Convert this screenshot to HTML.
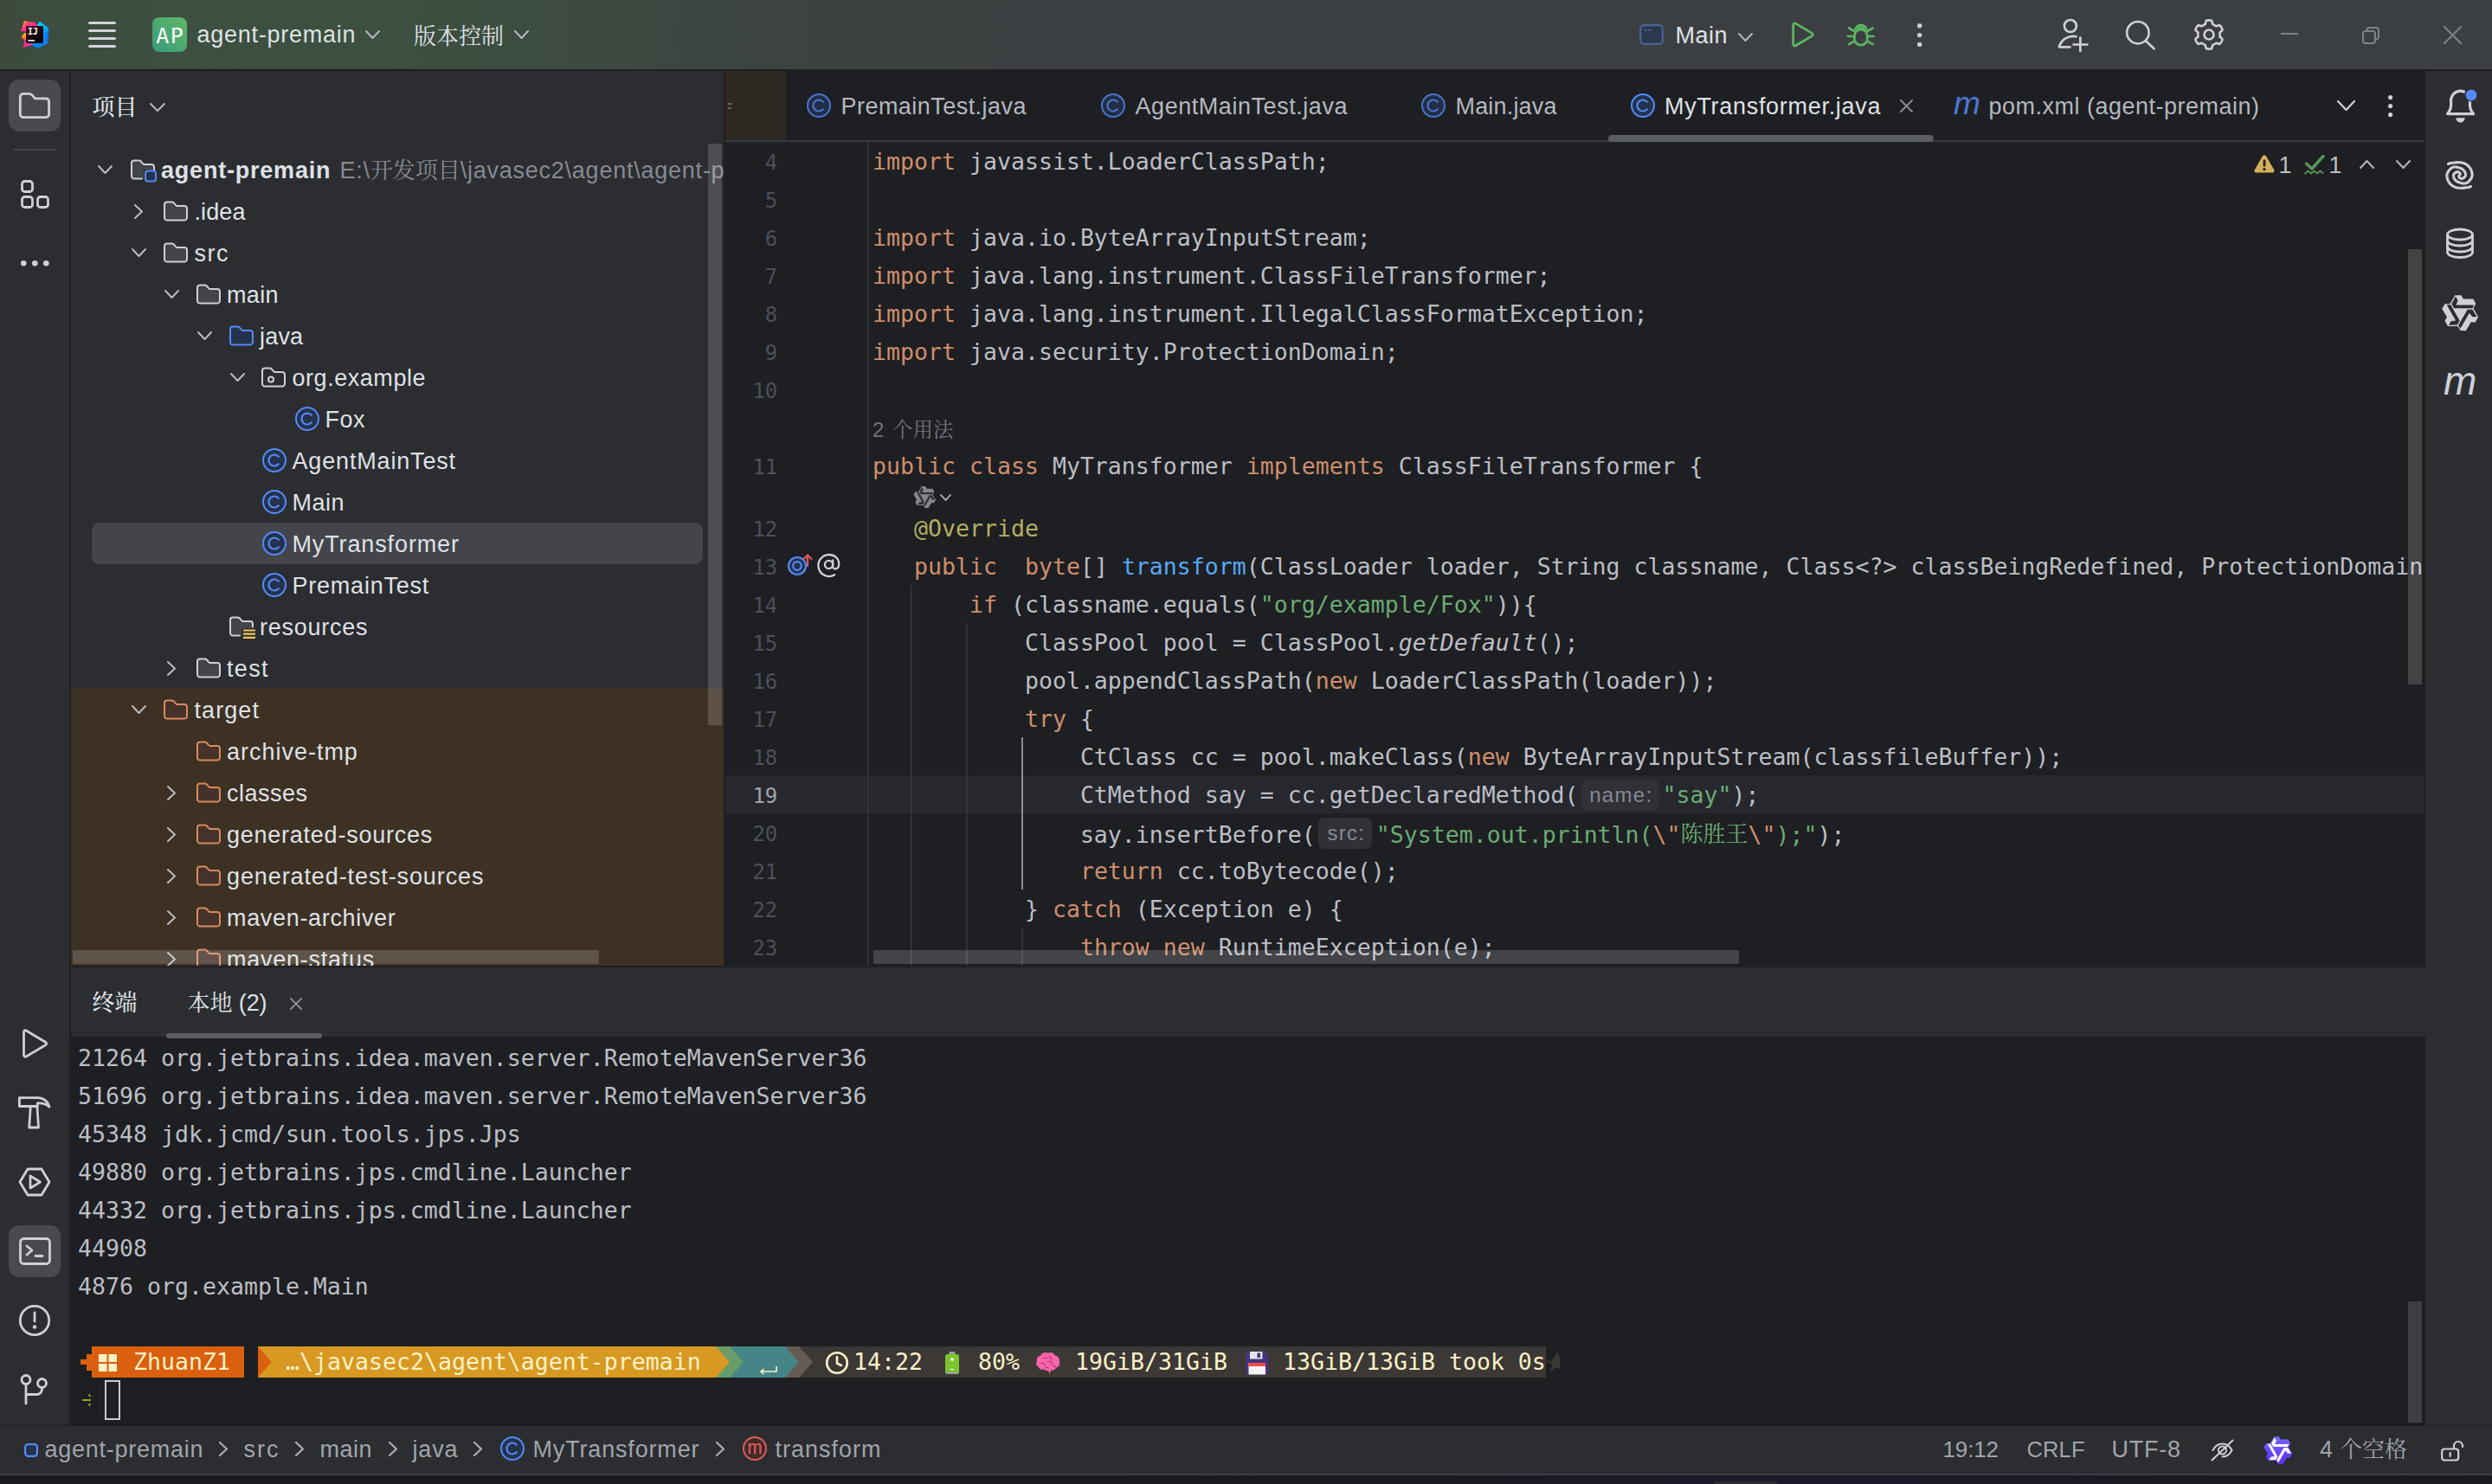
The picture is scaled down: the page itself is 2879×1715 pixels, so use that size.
<!DOCTYPE html>
<html lang="zh-CN"><head><meta charset="utf-8"><title>agent-premain – MyTransformer.java</title>
<style>
*{box-sizing:border-box;margin:0;padding:0}
html,body{width:2879px;height:1715px;overflow:hidden;background:#1e1f22}
body{font-family:'Liberation Sans','Noto Serif CJK SC',sans-serif;font-size:27px;color:#dfe1e5;position:relative}
#app{position:absolute;left:0;top:0;width:2879px;height:1715px;overflow:hidden}
.ic{position:absolute;overflow:visible;display:block}
.t{position:absolute;white-space:pre;line-height:1;font-family:'Liberation Sans','Noto Serif CJK SC',sans-serif}
.p{display:inline-block;width:0;height:0}
.cj{letter-spacing:0}
.clip{position:absolute;overflow:hidden}
.clipin{position:absolute;width:2879px;height:1715px}
.tb-bg{position:absolute;left:0;top:0;width:2879px;height:80px;background:linear-gradient(90deg,#3c4b3e 0,#3d4f40 200px,#3d5040 420px,#3d4b40 640px,#3c4441 860px,#3c4041 1050px,#3c3f41 1200px,#3c3f41 100%)}
.ap-badge{position:absolute;left:176px;top:20px;width:40px;height:40px;border-radius:8px;background:linear-gradient(45deg,#3a9a7c 0,#4aa872 45%,#62b866 100%)}
.ln,.cl,.tl,.pl,.pt{position:absolute;white-space:pre;font-family:'DejaVu Sans Mono','Liberation Mono','Noto Serif CJK SC',monospace;font-size:26.576px;height:44px;line-height:44px}
.ln{color:#4b5059;font-size:24px;margin-top:1px}
.ln.cur{color:#a1a3ab}
.cl{left:1008px;color:#bcbec4}
.tl{left:90px;color:#bcbec4}
.pl{left:0;width:0}
.pt{top:0;color:#fbf1c7}
.k{color:#cf8e6d}.s{color:#6aab73}.f{color:#56a8f5}.a{color:#b3ae60}.i{font-style:italic}.e{color:#cf8e6d}
.cjk{font-family:'Noto Serif CJK SC',serif;font-size:26px;position:relative;top:-1px}
.hint{display:inline-block;position:relative;height:44px;vertical-align:top;text-align:center}
.hb{position:absolute;top:4px;height:36px;border-radius:7px;background:#2f3136}
.ht{position:relative;top:-1.5px;font-family:'Liberation Sans','Noto Serif CJK SC',sans-serif;font-size:24px;letter-spacing:1.3px;margin-right:-1.3px;color:#868a91}
.cursor{position:absolute;border:2px solid #c9cbd0}
</style></head>
<body>
<div id="app">
<header id="titlebar">
<div class="tb-bg"></div>
<svg class="ic" style="left:24px;top:23px" width="33" height="34" viewBox="0 0 33 34" ><defs><linearGradient id="lgA" x1="0" y1="0" x2="1" y2="1"><stop offset="0" stop-color="#fdb60d"/><stop offset=".45" stop-color="#ff318c"/><stop offset="1" stop-color="#fe2857"/></linearGradient><linearGradient id="lgB" x1="0" y1="0" x2="0" y2="1"><stop offset="0" stop-color="#fdc50d"/><stop offset="1" stop-color="#fc5a1d"/></linearGradient><linearGradient id="lgC" x1="0" y1="1" x2="1" y2="0"><stop offset="0" stop-color="#fe2857"/><stop offset="1" stop-color="#d23bff"/></linearGradient><linearGradient id="lgD" x1=".4" y1="0" x2=".6" y2="1"><stop offset="0" stop-color="#00d5ff"/><stop offset=".5" stop-color="#0a93fb"/><stop offset="1" stop-color="#087cfa"/></linearGradient><linearGradient id="lgE" x1="0" y1="0" x2="1" y2="1"><stop offset="0" stop-color="#4a0d24"/><stop offset=".55" stop-color="#16060c"/><stop offset="1" stop-color="#000"/></linearGradient></defs><polygon points="4,.8 9,2.200 15.500,2.200 18.900,5.800 18.900,7.500 6.500,7.500 6.500,13.400 0,13.100" fill="url(#lgA)"/><polygon points=".6,19.600 4.500,15.100 6.500,15.100 6.500,23.500 4.500,23.500" fill="url(#lgB)"/><polygon points="2.600,31.900 4.500,23 6.500,23 6.500,26.500 13.500,26.500 13,28.900" fill="url(#lgC)"/><polygon points="18.900,5.800 22,1.700 32.300,9.500 30.900,27.400 19.100,33.100 13,28.900 13.500,26.500 25.500,26.500 25.500,7.500 18.900,7.500" fill="url(#lgD)"/><polygon points="32.300,9.500 30.900,27.400 27,18" fill="#0a6cf0" opacity=".55"/><rect x="6.100" y="7.100" width="19.900" height="19.800" fill="url(#lgE)"/><text x="8" y="17" font-family="DejaVu Sans Mono, Liberation Mono, monospace" font-weight="700" font-size="10" fill="#fff" letter-spacing="-.3">IJ</text><rect x="8.500" y="23" width="7.500" height="1.600" fill="#fff"/></svg>
<div style="position:absolute;left:102px;top:25.0px;width:32.2px;height:3px;background:#d3d5db;border-radius:1.5px;"></div>
<div style="position:absolute;left:102px;top:33.95px;width:32.2px;height:3px;background:#d3d5db;border-radius:1.5px;"></div>
<div style="position:absolute;left:102px;top:42.95px;width:32.2px;height:3px;background:#d3d5db;border-radius:1.5px;"></div>
<div style="position:absolute;left:102px;top:52.0px;width:32.2px;height:3px;background:#d3d5db;border-radius:1.5px;"></div>
<div class="ap-badge"></div>
<span class="t ap" style="left:180.20px;top:29.00px;font-size:25px;color:#ffffff;letter-spacing:1.400px;font-family:'DejaVu Sans Mono','Liberation Mono',monospace">AP</span>
<span class="t" style="left:227.50px;top:27.00px;font-size:27px;color:#dfe1e5;letter-spacing:0.741px">agent-premain</span>
<svg class="ic" style="left:420.5px;top:34.0px" width="19" height="12" viewBox="0 0 19 12" ><path d="M2 2L9.5 10L17 2" fill="none" stroke="#b4b8bf" stroke-width="2" stroke-linecap="round" stroke-linejoin="round"/></svg>
<span class="t" style="left:478.00px;top:28.50px;font-size:26px;color:#dfe1e5"><span class="cj" style="font-size:26px">版本控制</span></span>
<svg class="ic" style="left:592.5px;top:34.0px" width="19" height="12" viewBox="0 0 19 12" ><path d="M2 2L9.5 10L17 2" fill="none" stroke="#b4b8bf" stroke-width="2" stroke-linecap="round" stroke-linejoin="round"/></svg>
<svg class="ic" style="left:1894px;top:28px" width="28" height="24" viewBox="0 0 28 24" ><rect x="1.2" y="1.2" width="25.6" height="21.6" rx="4" fill="#2b3850" stroke="#4a6496" stroke-width="2.2"/><rect x="5.5" y="6" width="3" height="1.8" fill="#4a6496"/><rect x="10.5" y="6" width="3" height="1.8" fill="#4a6496"/></svg>
<span class="t" style="left:1935.50px;top:28.00px;font-size:27px;color:#dfe1e5;letter-spacing:0.490px">Main</span>
<svg class="ic" style="left:2006.5px;top:36.5px" width="19" height="12" viewBox="0 0 19 12" ><path d="M2 2L9.5 10L17 2" fill="none" stroke="#b4b8bf" stroke-width="2" stroke-linecap="round" stroke-linejoin="round"/></svg>
<svg class="ic" style="left:2068px;top:24px" width="32" height="32" viewBox="0 0 32 32" ><path d="M3.7 4.7V27.200a1.800 1.800 0 0 0 2.750 1.500L25.500 17.450a1.800 1.800 0 0 0 0-3.050L6.450 3.150A1.800 1.800 0 0 0 3.700 4.700z" fill="none" stroke="#5db561" stroke-width="2.800" stroke-linejoin="round"/></svg>
<svg class="ic" style="left:2134px;top:24px" width="32" height="32" viewBox="0 0 32 32" ><g fill="none" stroke="#5db561" stroke-width="2.700" stroke-linecap="round" stroke-linejoin="round"><rect x="8.400" y="10.200" width="14.900" height="18" rx="7.450"/><path d="M9.500 10.500A6.400 6.400 0 0 1 22.200 10.500"/><path d="M12.700 9.600A3.300 3.300 0 0 1 19 9.600"/><path d="M2.100 8.500L8.400 12.200M1 18H7.800M2.100 27.200L8.400 23.500M29.600 8.500L23.300 12.200M30.700 18H23.900M29.600 27.200L23.300 23.500"/></g></svg>
<svg class="ic" style="left:2214.1000000000004px;top:25.5px" width="7.4" height="29.1" viewBox="0 0 7.4 29.1" ><circle cx="3.7" cy="3.6999999999999993" r="2.7" fill="#ced0d6"/><circle cx="3.7" cy="14.600000000000001" r="2.7" fill="#ced0d6"/><circle cx="3.7" cy="25.4" r="2.7" fill="#ced0d6"/></svg>
<svg class="ic" style="left:2376px;top:22px" width="38" height="40" viewBox="0 0 38 40" ><g fill="none" stroke="#ced0d6" stroke-width="2.700" stroke-linecap="round" stroke-linejoin="round"><circle cx="15.900" cy="8" r="7"/><path d="M22.500 20.300A16.500 16.500 0 0 0 2.900 32.300H15.500"/><path d="M27.400 21.500V37M19.500 29.500H35.500"/></g></svg>
<svg class="ic" style="left:2455px;top:23px" width="36" height="36" viewBox="0 0 36 36" ><g fill="none" stroke="#ced0d6" stroke-width="2.6" stroke-linecap="round"><circle cx="14.900" cy="14.700" r="12.700"/><path d="M24 24.200L33.600 33.300"/></g></svg>
<svg class="ic" style="left:2534px;top:21px" width="36" height="38" viewBox="0 0 36 38" ><path d="M18.00 2.40L18.58 2.41L19.16 2.44L19.74 2.49L20.31 2.56L20.88 2.68L21.35 3.25L21.67 4.26L21.89 5.44L22.08 6.45L22.35 7.04L22.76 7.22L23.17 7.40L23.57 7.59L23.96 7.79L24.35 8.00L24.73 8.23L25.10 8.47L25.46 8.73L25.82 8.99L26.18 9.25L26.83 9.19L27.80 8.85L28.93 8.45L29.96 8.23L30.69 8.35L31.08 8.78L31.43 9.24L31.76 9.72L32.08 10.20L32.38 10.70L32.66 11.21L32.92 11.72L33.16 12.25L33.39 12.78L33.57 13.33L33.31 14.02L32.60 14.81L31.69 15.59L30.91 16.26L30.54 16.79L30.58 17.23L30.63 17.67L30.67 18.11L30.69 18.56L30.70 19.00L30.69 19.44L30.67 19.89L30.63 20.33L30.58 20.77L30.54 21.21L30.91 21.74L31.69 22.41L32.60 23.19L33.31 23.98L33.57 24.67L33.39 25.22L33.16 25.75L32.92 26.28L32.66 26.79L32.38 27.30L32.08 27.80L31.76 28.28L31.43 28.76L31.08 29.22L30.69 29.65L29.96 29.77L28.93 29.55L27.80 29.15L26.83 28.81L26.18 28.75L25.82 29.01L25.46 29.27L25.10 29.53L24.73 29.77L24.35 30.00L23.96 30.21L23.57 30.41L23.17 30.60L22.76 30.78L22.35 30.96L22.08 31.55L21.89 32.56L21.67 33.74L21.35 34.75L20.88 35.32L20.31 35.44L19.74 35.51L19.16 35.56L18.58 35.59L18.00 35.60L17.42 35.59L16.84 35.56L16.26 35.51L15.69 35.44L15.12 35.32L14.65 34.75L14.33 33.74L14.11 32.56L13.92 31.55L13.65 30.96L13.24 30.78L12.83 30.60L12.43 30.41L12.04 30.21L11.65 30.00L11.27 29.77L10.90 29.53L10.54 29.27L10.18 29.01L9.82 28.75L9.17 28.81L8.20 29.15L7.07 29.55L6.04 29.77L5.31 29.65L4.92 29.22L4.57 28.76L4.24 28.28L3.92 27.80L3.62 27.30L3.34 26.79L3.08 26.28L2.84 25.75L2.61 25.22L2.43 24.67L2.69 23.98L3.40 23.19L4.31 22.41L5.09 21.74L5.46 21.21L5.42 20.77L5.37 20.33L5.33 19.89L5.31 19.44L5.30 19.00L5.31 18.56L5.33 18.11L5.37 17.67L5.42 17.23L5.46 16.79L5.09 16.26L4.31 15.59L3.40 14.81L2.69 14.02L2.43 13.33L2.61 12.78L2.84 12.25L3.08 11.72L3.34 11.21L3.62 10.70L3.92 10.20L4.24 9.72L4.57 9.24L4.92 8.78L5.31 8.35L6.04 8.23L7.07 8.45L8.20 8.85L9.17 9.19L9.82 9.25L10.18 8.99L10.54 8.73L10.90 8.47L11.27 8.23L11.65 8.00L12.04 7.79L12.43 7.59L12.83 7.40L13.24 7.22L13.65 7.04L13.92 6.45L14.11 5.44L14.33 4.26L14.65 3.25L15.12 2.68L15.69 2.56L16.26 2.49L16.84 2.44L17.42 2.41Z" fill="none" stroke="#ced0d6" stroke-width="2.6" stroke-linejoin="round"/><circle cx="18" cy="19" r="5.500" fill="none" stroke="#ced0d6" stroke-width="2.6"/></svg>
<div style="position:absolute;left:2635px;top:38px;width:20px;height:2px;background:#7f8287;"></div>
<svg class="ic" style="left:2729px;top:31px" width="20" height="20" viewBox="0 0 20 20" ><g fill="none" stroke="#7f8287" stroke-width="2"><rect x="1" y="5" width="14" height="14" rx="3"/><path d="M5.5 4.5V4a3 3 0 0 1 3-3H16a3 3 0 0 1 3 3v7.5a3 3 0 0 1-3 3h-.5"/></g></svg>
<svg class="ic" style="left:2821.5px;top:28.5px" width="23" height="23" viewBox="0 0 23 23" ><path d="M2 2L21 21M21 2L2 21" fill="none" stroke="#7f8287" stroke-width="2" stroke-linecap="round"/></svg>
</header>
<nav id="left-strip">
<div style="position:absolute;left:0px;top:82px;width:80px;height:1565px;background:#2b2d30;"></div>
<div style="position:absolute;left:10px;top:92px;width:60px;height:60px;background:#484a50;border-radius:12px;"></div>
<svg class="ic" style="left:20px;top:104px" width="40" height="36" viewBox="0 0 40 36" ><path d="M3.3 8a3.6 3.6 0 0 1 3.6-3.6h7.2a3.6 3.6 0 0 1 2.7 1.2l3 3.4a2.4 2.4 0 0 0 1.8 .8H33a3.6 3.6 0 0 1 3.6 3.6V28a3.6 3.6 0 0 1-3.6 3.6H6.9A3.6 3.6 0 0 1 3.3 28z" fill="none" stroke="#ced0d6" stroke-width="2.8" stroke-linecap="round" stroke-linejoin="round"/></svg>
<div style="position:absolute;left:16px;top:171.5px;width:48px;height:2px;background:#43454a;"></div>
<svg class="ic" style="left:23.5px;top:207.5px" width="33" height="33" viewBox="0 0 33 33" ><g fill="none" stroke="#ced0d6" stroke-width="2.8" stroke-linecap="round" stroke-linejoin="round"><rect x="1.5" y="1.5" width="12" height="12" rx="3"/><rect x="1.5" y="19.5" width="12" height="12" rx="3"/><rect x="19.5" y="19.5" width="12" height="12" rx="3"/></g></svg>
<svg class="ic" style="left:22.7px;top:299.7px" width="34.6" height="8.6" viewBox="0 0 34.6 8.6" ><circle cx="4.300000000000001" cy="4.3" r="3.3" fill="#ced0d6"/><circle cx="17.3" cy="4.3" r="3.3" fill="#ced0d6"/><circle cx="30.3" cy="4.3" r="3.3" fill="#ced0d6"/></svg>
<svg class="ic" style="left:22px;top:1186px" width="36" height="40" viewBox="0 0 36 40" ><path d="M5.5 6.5v27a1.8 1.8 0 0 0 2.7 1.5l22.6-13.4a1.8 1.8 0 0 0 0-3.1L8.200 5a1.8 1.8 0 0 0-2.7 1.5z" fill="none" stroke="#ced0d6" stroke-width="2.8" stroke-linecap="round" stroke-linejoin="round"/></svg>
<svg class="ic" style="left:21px;top:1267px" width="38" height="38" viewBox="0 0 38 38" ><g fill="none" stroke="#ced0d6" stroke-width="2.8" stroke-linecap="round" stroke-linejoin="round"><path d="M1.400 1.600H22c7 0 12 3.800 14 10.600-3.500-3.400-7.500-4.400-12-4.300h-1.700v3.600H1.400z"/><path d="M14.300 11.500L12.700 36H23.500L21.900 11.500"/></g></svg>
<svg class="ic" style="left:20px;top:1349px" width="40" height="34" viewBox="0 0 40 34" ><g fill="none" stroke="#ced0d6" stroke-width="2.8" stroke-linecap="round" stroke-linejoin="round"><path d="M12 2h16l9 15-9 15H12L3 17z"/><path d="M15 10v14l11.500-7z"/></g></svg>
<div style="position:absolute;left:10px;top:1416px;width:60px;height:60px;background:#484a50;border-radius:12px;"></div>
<svg class="ic" style="left:21.5px;top:1430px" width="37" height="32" viewBox="0 0 37 32" ><g fill="none" stroke="#ced0d6" stroke-width="2.8" stroke-linecap="round" stroke-linejoin="round"><rect x="1.5" y="1.5" width="34" height="29" rx="4"/><path d="M9 10l6 5-6 5M19 21.500h8"/></g></svg>
<svg class="ic" style="left:21px;top:1507px" width="38" height="38" viewBox="0 0 38 38" ><g fill="none" stroke="#ced0d6" stroke-width="2.8" stroke-linecap="round" stroke-linejoin="round"><circle cx="19" cy="19" r="16.700"/><path d="M19 10v10"/></g><circle cx="19" cy="26.500" r="2.2" fill="#ced0d6"/></svg>
<svg class="ic" style="left:23px;top:1588px" width="33" height="36" viewBox="0 0 33 36" ><g fill="none" stroke="#ced0d6" stroke-width="2.8" stroke-linecap="round" stroke-linejoin="round"><circle cx="7" cy="6.500" r="5"/><circle cx="25.500" cy="10.500" r="5"/><path d="M7 11.500v22.500M25.500 15.500v2a6 6 0 0 1-6 6H7"/></g></svg>
</nav>
<aside id="project">
<div style="position:absolute;left:80px;top:80px;width:2px;height:1568px;background:#1e1f22;"></div>
<div class="panel" style="position:absolute;left:82px;top:82px;width:754px;height:1034px;background:#2b2d30;"></div>
<div style="position:absolute;left:836px;top:82px;width:2px;height:1036px;background:#1e1f22;"></div>
<div style="position:absolute;left:80px;top:1116px;width:2722px;height:2px;background:#1e1f22;"></div>
<span class="t" style="left:106.50px;top:110.50px;font-size:26px;color:#dfe1e5"><span class="cj" style="font-size:26px;font-weight:500">项目</span></span>
<svg class="ic" style="left:172.0px;top:118.0px" width="20" height="12" viewBox="0 0 20 12" ><path d="M2 2L10.0 10L18 2" fill="none" stroke="#b4b8bf" stroke-width="2" stroke-linecap="round" stroke-linejoin="round"/></svg>
<div class="clip" style="left:82px;top:160px;width:754px;height:956px"><div class="clipin" style="left:-82px;top:-160px">
<div style="position:absolute;left:82px;top:796px;width:754px;height:330px;background:#3d3124;"></div>
<div style="position:absolute;left:106px;top:604px;width:706px;height:48px;background:#43454a;border-radius:9px;"></div>
<div class="trow">
<svg class="ic" style="left:112.0px;top:190.0px" width="19" height="12" viewBox="0 0 19 12" ><path d="M2 2L9.5 10L17 2" fill="none" stroke="#b9bcc2" stroke-width="2" stroke-linecap="round" stroke-linejoin="round"/></svg>
<svg class="ic" style="left:148.5px;top:180px" width="33" height="32" viewBox="0 0 33 32" ><path d="M3 8.5a3 3 0 0 1 3-3h5.6a3 3 0 0 1 2.2 1l2.6 2.9a2 2 0 0 0 1.5 .6H26a3 3 0 0 1 3 3v3H20a3 3 0 0 0-3 3v7.500H6a3 3 0 0 1-3-3z" fill="#43454a"/><path d="M3 8.5a3 3 0 0 1 3-3h5.6a3 3 0 0 1 2.2 1l2.6 2.9a2 2 0 0 0 1.5 .6H26a3 3 0 0 1 3 3v4M15 26.500H6a3 3 0 0 1-3-3V8.5" fill="none" stroke="#ced0d6" stroke-width="2" stroke-linejoin="round" stroke-linecap="round"/><rect x="19" y="17.500" width="12" height="12" rx="3" fill="#25324d" stroke="#548af7" stroke-width="2"/></svg>
<span class="t" style="left:186.00px;top:183.50px;font-size:27px;color:#dfe1e5;letter-spacing:0.788px;font-weight:700">agent-premain</span>
<span class="t" style="left:392.50px;top:183.50px;font-size:27px;color:#868a91;letter-spacing:0.750px">E:\<span class="cj" style="font-size:26px">开发项目</span>\javasec2\agent\agent-premain</span>
</div>
<div class="trow">
<svg class="ic" style="left:154.0px;top:234.5px" width="12" height="19" viewBox="0 0 12 19" ><path d="M2 2L10 9.5L2 17" fill="none" stroke="#b9bcc2" stroke-width="2" stroke-linecap="round" stroke-linejoin="round"/></svg>
<svg class="ic" style="left:187px;top:228px" width="32" height="32" viewBox="0 0 32 32" ><path d="M3 8.5a3 3 0 0 1 3-3h5.6a3 3 0 0 1 2.2 1l2.6 2.9a2 2 0 0 0 1.5 .6H26a3 3 0 0 1 3 3v10.5a3 3 0 0 1-3 3H6a3 3 0 0 1-3-3z" fill="#43454a" stroke="#ced0d6" stroke-width="2" stroke-linejoin="round"/></svg>
<span class="t" style="left:224.50px;top:231.50px;font-size:27px;color:#dfe1e5;letter-spacing:0.109px">.idea</span>
</div>
<div class="trow">
<svg class="ic" style="left:150.5px;top:286.0px" width="19" height="12" viewBox="0 0 19 12" ><path d="M2 2L9.5 10L17 2" fill="none" stroke="#b9bcc2" stroke-width="2" stroke-linecap="round" stroke-linejoin="round"/></svg>
<svg class="ic" style="left:187px;top:276px" width="32" height="32" viewBox="0 0 32 32" ><path d="M3 8.5a3 3 0 0 1 3-3h5.6a3 3 0 0 1 2.2 1l2.6 2.9a2 2 0 0 0 1.5 .6H26a3 3 0 0 1 3 3v10.5a3 3 0 0 1-3 3H6a3 3 0 0 1-3-3z" fill="#43454a" stroke="#ced0d6" stroke-width="2" stroke-linejoin="round"/></svg>
<span class="t" style="left:224.50px;top:279.50px;font-size:27px;color:#dfe1e5;letter-spacing:1.500px">src</span>
</div>
<div class="trow">
<svg class="ic" style="left:188.5px;top:334.0px" width="19" height="12" viewBox="0 0 19 12" ><path d="M2 2L9.5 10L17 2" fill="none" stroke="#b9bcc2" stroke-width="2" stroke-linecap="round" stroke-linejoin="round"/></svg>
<svg class="ic" style="left:224.5px;top:324px" width="32" height="32" viewBox="0 0 32 32" ><path d="M3 8.5a3 3 0 0 1 3-3h5.6a3 3 0 0 1 2.2 1l2.6 2.9a2 2 0 0 0 1.5 .6H26a3 3 0 0 1 3 3v10.5a3 3 0 0 1-3 3H6a3 3 0 0 1-3-3z" fill="#43454a" stroke="#ced0d6" stroke-width="2" stroke-linejoin="round"/></svg>
<span class="t" style="left:262.00px;top:327.50px;font-size:27px;color:#dfe1e5;letter-spacing:0.323px">main</span>
</div>
<div class="trow">
<svg class="ic" style="left:226.5px;top:382.0px" width="19" height="12" viewBox="0 0 19 12" ><path d="M2 2L9.5 10L17 2" fill="none" stroke="#b9bcc2" stroke-width="2" stroke-linecap="round" stroke-linejoin="round"/></svg>
<svg class="ic" style="left:262.5px;top:372px" width="32" height="32" viewBox="0 0 32 32" ><path d="M3 8.5a3 3 0 0 1 3-3h5.6a3 3 0 0 1 2.2 1l2.6 2.9a2 2 0 0 0 1.5 .6H26a3 3 0 0 1 3 3v10.5a3 3 0 0 1-3 3H6a3 3 0 0 1-3-3z" fill="#25324d" stroke="#548af7" stroke-width="2" stroke-linejoin="round"/></svg>
<span class="t" style="left:300.00px;top:375.50px;font-size:27px;color:#dfe1e5;letter-spacing:0.190px">java</span>
</div>
<div class="trow">
<svg class="ic" style="left:264.5px;top:430.0px" width="19" height="12" viewBox="0 0 19 12" ><path d="M2 2L9.5 10L17 2" fill="none" stroke="#b9bcc2" stroke-width="2" stroke-linecap="round" stroke-linejoin="round"/></svg>
<svg class="ic" style="left:300px;top:420px" width="32" height="32" viewBox="0 0 32 32" ><path d="M3 8.5a3 3 0 0 1 3-3h5.6a3 3 0 0 1 2.2 1l2.6 2.9a2 2 0 0 0 1.5 .6H26a3 3 0 0 1 3 3v10.5a3 3 0 0 1-3 3H6a3 3 0 0 1-3-3z" fill="none" stroke="#ced0d6" stroke-width="2" stroke-linejoin="round"/><circle cx="13" cy="18.5" r="3" fill="none" stroke="#ced0d6" stroke-width="2"/></svg>
<span class="t" style="left:337.50px;top:423.50px;font-size:27px;color:#dfe1e5;letter-spacing:0.541px">org.example</span>
</div>
<div class="trow">
<svg class="ic" style="left:341px;top:470px" width="28" height="28" viewBox="0 0 28 28" ><circle cx="14.0" cy="14.0" r="13.0" fill="#25324d" stroke="#548af7" stroke-width="2"/><path d="M18.83 9.65A6.50 6.50 0 1 0 18.83 18.35" fill="none" stroke="#548af7" stroke-width="2.2" stroke-linecap="round"/></svg>
<span class="t" style="left:375.50px;top:471.50px;font-size:27px;color:#dfe1e5;letter-spacing:0.492px">Fox</span>
</div>
<div class="trow">
<svg class="ic" style="left:303px;top:518px" width="28" height="28" viewBox="0 0 28 28" ><circle cx="14.0" cy="14.0" r="13.0" fill="#25324d" stroke="#548af7" stroke-width="2"/><path d="M18.83 9.65A6.50 6.50 0 1 0 18.83 18.35" fill="none" stroke="#548af7" stroke-width="2.2" stroke-linecap="round"/></svg>
<span class="t" style="left:337.50px;top:519.50px;font-size:27px;color:#dfe1e5;letter-spacing:0.833px">AgentMainTest</span>
</div>
<div class="trow">
<svg class="ic" style="left:303px;top:566px" width="28" height="28" viewBox="0 0 28 28" ><circle cx="14.0" cy="14.0" r="13.0" fill="#25324d" stroke="#548af7" stroke-width="2"/><path d="M18.83 9.65A6.50 6.50 0 1 0 18.83 18.35" fill="none" stroke="#548af7" stroke-width="2.2" stroke-linecap="round"/></svg>
<span class="t" style="left:337.50px;top:567.50px;font-size:27px;color:#dfe1e5;letter-spacing:0.490px">Main</span>
</div>
<div class="trow">
<svg class="ic" style="left:303px;top:614px" width="28" height="28" viewBox="0 0 28 28" ><circle cx="14.0" cy="14.0" r="13.0" fill="#25324d" stroke="#548af7" stroke-width="2"/><path d="M18.83 9.65A6.50 6.50 0 1 0 18.83 18.35" fill="none" stroke="#548af7" stroke-width="2.2" stroke-linecap="round"/></svg>
<span class="t" style="left:337.50px;top:615.50px;font-size:27px;color:#dfe1e5;letter-spacing:0.874px">MyTransformer</span>
</div>
<div class="trow">
<svg class="ic" style="left:303px;top:662px" width="28" height="28" viewBox="0 0 28 28" ><circle cx="14.0" cy="14.0" r="13.0" fill="#25324d" stroke="#548af7" stroke-width="2"/><path d="M18.83 9.65A6.50 6.50 0 1 0 18.83 18.35" fill="none" stroke="#548af7" stroke-width="2.2" stroke-linecap="round"/></svg>
<span class="t" style="left:337.50px;top:663.50px;font-size:27px;color:#dfe1e5;letter-spacing:0.774px">PremainTest</span>
</div>
<div class="trow">
<svg class="ic" style="left:262.5px;top:708px" width="33" height="32" viewBox="0 0 33 32" ><path d="M3 8.5a3 3 0 0 1 3-3h5.6a3 3 0 0 1 2.2 1l2.6 2.9a2 2 0 0 0 1.5 .6H26a3 3 0 0 1 3 3v5H16v9H6a3 3 0 0 1-3-3z" fill="#43454a"/><path d="M3 8.5a3 3 0 0 1 3-3h5.6a3 3 0 0 1 2.2 1l2.6 2.9a2 2 0 0 0 1.5 .6H26a3 3 0 0 1 3 3v3.500M14 26.500H6a3 3 0 0 1-3-3V8.5" fill="none" stroke="#ced0d6" stroke-width="2" stroke-linejoin="round" stroke-linecap="round"/><path d="M18 20.500h14M18 24.700h14M18 28.900h14" stroke="#f2c55c" stroke-width="2.200"/></svg>
<span class="t" style="left:300.00px;top:711.50px;font-size:27px;color:#dfe1e5;letter-spacing:0.744px">resources</span>
</div>
<div class="trow">
<svg class="ic" style="left:192.0px;top:762.5px" width="12" height="19" viewBox="0 0 12 19" ><path d="M2 2L10 9.5L2 17" fill="none" stroke="#b9bcc2" stroke-width="2" stroke-linecap="round" stroke-linejoin="round"/></svg>
<svg class="ic" style="left:224.5px;top:756px" width="32" height="32" viewBox="0 0 32 32" ><path d="M3 8.5a3 3 0 0 1 3-3h5.6a3 3 0 0 1 2.2 1l2.6 2.9a2 2 0 0 0 1.5 .6H26a3 3 0 0 1 3 3v10.5a3 3 0 0 1-3 3H6a3 3 0 0 1-3-3z" fill="#43454a" stroke="#ced0d6" stroke-width="2" stroke-linejoin="round"/></svg>
<span class="t" style="left:262.00px;top:759.50px;font-size:27px;color:#dfe1e5;letter-spacing:1.323px">test</span>
</div>
<div class="trow">
<svg class="ic" style="left:150.5px;top:814.0px" width="19" height="12" viewBox="0 0 19 12" ><path d="M2 2L9.5 10L17 2" fill="none" stroke="#b9bcc2" stroke-width="2" stroke-linecap="round" stroke-linejoin="round"/></svg>
<svg class="ic" style="left:187px;top:804px" width="32" height="32" viewBox="0 0 32 32" ><path d="M3 8.5a3 3 0 0 1 3-3h5.6a3 3 0 0 1 2.2 1l2.6 2.9a2 2 0 0 0 1.5 .6H26a3 3 0 0 1 3 3v10.5a3 3 0 0 1-3 3H6a3 3 0 0 1-3-3z" fill="#45322b" stroke="#d98a5c" stroke-width="2" stroke-linejoin="round"/></svg>
<span class="t" style="left:224.50px;top:807.50px;font-size:27px;color:#dfe1e5;letter-spacing:1.071px">target</span>
</div>
<div class="trow">
<svg class="ic" style="left:224.5px;top:852px" width="32" height="32" viewBox="0 0 32 32" ><path d="M3 8.5a3 3 0 0 1 3-3h5.6a3 3 0 0 1 2.2 1l2.6 2.9a2 2 0 0 0 1.5 .6H26a3 3 0 0 1 3 3v10.5a3 3 0 0 1-3 3H6a3 3 0 0 1-3-3z" fill="#45322b" stroke="#d98a5c" stroke-width="2" stroke-linejoin="round"/></svg>
<span class="t" style="left:262.00px;top:855.50px;font-size:27px;color:#dfe1e5;letter-spacing:0.985px">archive-tmp</span>
</div>
<div class="trow">
<svg class="ic" style="left:192.0px;top:906.5px" width="12" height="19" viewBox="0 0 12 19" ><path d="M2 2L10 9.5L2 17" fill="none" stroke="#b9bcc2" stroke-width="2" stroke-linecap="round" stroke-linejoin="round"/></svg>
<svg class="ic" style="left:224.5px;top:900px" width="32" height="32" viewBox="0 0 32 32" ><path d="M3 8.5a3 3 0 0 1 3-3h5.6a3 3 0 0 1 2.2 1l2.6 2.9a2 2 0 0 0 1.5 .6H26a3 3 0 0 1 3 3v10.5a3 3 0 0 1-3 3H6a3 3 0 0 1-3-3z" fill="#45322b" stroke="#d98a5c" stroke-width="2" stroke-linejoin="round"/></svg>
<span class="t" style="left:262.00px;top:903.50px;font-size:27px;color:#dfe1e5;letter-spacing:0.511px">classes</span>
</div>
<div class="trow">
<svg class="ic" style="left:192.0px;top:954.5px" width="12" height="19" viewBox="0 0 12 19" ><path d="M2 2L10 9.5L2 17" fill="none" stroke="#b9bcc2" stroke-width="2" stroke-linecap="round" stroke-linejoin="round"/></svg>
<svg class="ic" style="left:224.5px;top:948px" width="32" height="32" viewBox="0 0 32 32" ><path d="M3 8.5a3 3 0 0 1 3-3h5.6a3 3 0 0 1 2.2 1l2.6 2.9a2 2 0 0 0 1.5 .6H26a3 3 0 0 1 3 3v10.5a3 3 0 0 1-3 3H6a3 3 0 0 1-3-3z" fill="#45322b" stroke="#d98a5c" stroke-width="2" stroke-linejoin="round"/></svg>
<span class="t" style="left:262.00px;top:951.50px;font-size:27px;color:#dfe1e5;letter-spacing:0.754px">generated-sources</span>
</div>
<div class="trow">
<svg class="ic" style="left:192.0px;top:1002.5px" width="12" height="19" viewBox="0 0 12 19" ><path d="M2 2L10 9.5L2 17" fill="none" stroke="#b9bcc2" stroke-width="2" stroke-linecap="round" stroke-linejoin="round"/></svg>
<svg class="ic" style="left:224.5px;top:996px" width="32" height="32" viewBox="0 0 32 32" ><path d="M3 8.5a3 3 0 0 1 3-3h5.6a3 3 0 0 1 2.2 1l2.6 2.9a2 2 0 0 0 1.5 .6H26a3 3 0 0 1 3 3v10.5a3 3 0 0 1-3 3H6a3 3 0 0 1-3-3z" fill="#45322b" stroke="#d98a5c" stroke-width="2" stroke-linejoin="round"/></svg>
<span class="t" style="left:262.00px;top:999.50px;font-size:27px;color:#dfe1e5;letter-spacing:0.897px">generated-test-sources</span>
</div>
<div class="trow">
<svg class="ic" style="left:192.0px;top:1050.5px" width="12" height="19" viewBox="0 0 12 19" ><path d="M2 2L10 9.5L2 17" fill="none" stroke="#b9bcc2" stroke-width="2" stroke-linecap="round" stroke-linejoin="round"/></svg>
<svg class="ic" style="left:224.5px;top:1044px" width="32" height="32" viewBox="0 0 32 32" ><path d="M3 8.5a3 3 0 0 1 3-3h5.6a3 3 0 0 1 2.2 1l2.6 2.9a2 2 0 0 0 1.5 .6H26a3 3 0 0 1 3 3v10.5a3 3 0 0 1-3 3H6a3 3 0 0 1-3-3z" fill="#45322b" stroke="#d98a5c" stroke-width="2" stroke-linejoin="round"/></svg>
<span class="t" style="left:262.00px;top:1047.50px;font-size:27px;color:#dfe1e5;letter-spacing:0.672px">maven-archiver</span>
</div>
<div class="trow">
<svg class="ic" style="left:192.0px;top:1098.5px" width="12" height="19" viewBox="0 0 12 19" ><path d="M2 2L10 9.5L2 17" fill="none" stroke="#b9bcc2" stroke-width="2" stroke-linecap="round" stroke-linejoin="round"/></svg>
<svg class="ic" style="left:224.5px;top:1092px" width="32" height="32" viewBox="0 0 32 32" ><path d="M3 8.5a3 3 0 0 1 3-3h5.6a3 3 0 0 1 2.2 1l2.6 2.9a2 2 0 0 0 1.5 .6H26a3 3 0 0 1 3 3v10.5a3 3 0 0 1-3 3H6a3 3 0 0 1-3-3z" fill="#45322b" stroke="#d98a5c" stroke-width="2" stroke-linejoin="round"/></svg>
<span class="t" style="left:262.00px;top:1095.50px;font-size:27px;color:#dfe1e5;letter-spacing:0.738px">maven-status</span>
</div>
<div style="position:absolute;left:818px;top:166px;width:16px;height:672px;background:rgba(255,255,255,.16);"></div>
<div style="position:absolute;left:84px;top:1098px;width:608px;height:16px;background:rgba(255,255,255,.17);"></div>
</div></div>
</aside>
<main id="editor">
<div class="panel" style="position:absolute;left:838px;top:80px;width:1964px;height:1036px;background:#1e1f22;"></div>
<div id="tabs">
<div style="position:absolute;left:838px;top:82px;width:70px;height:80px;background:#2e2822;"></div>
<div style="position:absolute;left:841px;top:119px;width:5px;height:2px;background:#6b6258;"></div>
<div style="position:absolute;left:841px;top:124px;width:4px;height:2px;background:#6b6258;"></div>
<div style="position:absolute;left:838px;top:162px;width:1962px;height:2px;background:#393b40;"></div>
<svg class="ic" style="left:932px;top:108px" width="28" height="28" viewBox="0 0 28 28" ><circle cx="14.0" cy="14.0" r="13.0" fill="#222e47" stroke="#4a74c9" stroke-width="2"/><path d="M18.83 9.65A6.50 6.50 0 1 0 18.83 18.35" fill="none" stroke="#4a74c9" stroke-width="2.2" stroke-linecap="round"/></svg>
<span class="t" style="left:971.50px;top:110.00px;font-size:27px;color:#b4b8bf;letter-spacing:0.460px">PremainTest.java</span>
<svg class="ic" style="left:1272px;top:108px" width="28" height="28" viewBox="0 0 28 28" ><circle cx="14.0" cy="14.0" r="13.0" fill="#222e47" stroke="#4a74c9" stroke-width="2"/><path d="M18.83 9.65A6.50 6.50 0 1 0 18.83 18.35" fill="none" stroke="#4a74c9" stroke-width="2.2" stroke-linecap="round"/></svg>
<span class="t" style="left:1311.50px;top:110.00px;font-size:27px;color:#b4b8bf;letter-spacing:0.551px">AgentMainTest.java</span>
<svg class="ic" style="left:1642px;top:108px" width="28" height="28" viewBox="0 0 28 28" ><circle cx="14.0" cy="14.0" r="13.0" fill="#222e47" stroke="#4a74c9" stroke-width="2"/><path d="M18.83 9.65A6.50 6.50 0 1 0 18.83 18.35" fill="none" stroke="#4a74c9" stroke-width="2.2" stroke-linecap="round"/></svg>
<span class="t" style="left:1681.50px;top:110.00px;font-size:27px;color:#b4b8bf;letter-spacing:0.180px">Main.java</span>
<svg class="ic" style="left:1884px;top:108px" width="28" height="28" viewBox="0 0 28 28" ><circle cx="14.0" cy="14.0" r="13.0" fill="#25324d" stroke="#548af7" stroke-width="2"/><path d="M18.83 9.65A6.50 6.50 0 1 0 18.83 18.35" fill="none" stroke="#548af7" stroke-width="2.2" stroke-linecap="round"/></svg>
<span class="t" style="left:1923.00px;top:110.00px;font-size:27px;color:#dfe1e5;letter-spacing:0.702px">MyTransformer.java</span>
<svg class="ic" style="left:2193.5px;top:113.5px" width="17" height="17" viewBox="0 0 17 17" ><path d="M2 2L15 15M15 2L2 15" fill="none" stroke="#868a91" stroke-width="2" stroke-linecap="round"/></svg>
<div style="position:absolute;left:1858px;top:156px;width:376px;height:8px;background:#5a5d63;border-radius:4px;"></div>
<span class="t" style="left:2257.00px;top:101.00px;font-size:37px;color:#4a78d4;font-style:italic">m</span>
<span class="t" style="left:2297.50px;top:110.00px;font-size:27px;color:#b4b8bf;letter-spacing:0.495px">pom.xml (agent-premain)</span>
<svg class="ic" style="left:2698.5px;top:115.0px" width="23" height="14" viewBox="0 0 23 14" ><path d="M2 2L11.5 12L21 2" fill="none" stroke="#ced0d6" stroke-width="2.2" stroke-linecap="round" stroke-linejoin="round"/></svg>
<svg class="ic" style="left:2758.4px;top:108.9px" width="7.2" height="27.2" viewBox="0 0 7.2 27.2" ><circle cx="3.6" cy="3.5999999999999943" r="2.6" fill="#ced0d6"/><circle cx="3.6" cy="13.599999999999994" r="2.6" fill="#ced0d6"/><circle cx="3.6" cy="23.599999999999994" r="2.6" fill="#ced0d6"/></svg>
</div>
<div class="clip" style="left:838px;top:164px;width:1962px;height:952px"><div class="clipin" style="left:-838px;top:-164px">
<div style="position:absolute;left:838px;top:896px;width:1962px;height:44px;background:#26282e;"></div>
<div style="position:absolute;left:1002px;top:164px;width:2px;height:952px;background:#2f3236;"></div>
<div style="position:absolute;left:1052px;top:676px;width:2px;height:440px;background:#313438;"></div>
<div style="position:absolute;left:1116px;top:720px;width:2px;height:396px;background:#313438;"></div>
<div style="position:absolute;left:1180px;top:852px;width:2px;height:176px;background:#8a8d93;"></div>
<div style="position:absolute;left:1180px;top:1072px;width:2px;height:44px;background:#313438;"></div>
<div id="code">
<div class="ln" style="top:165px;left:883.85px">4</div>
<div class="cl" style="top:165px"><span class="k">import</span> javassist.LoaderClassPath;</div>
<div class="ln" style="top:209px;left:883.85px">5</div>
<div class="ln" style="top:253px;left:883.85px">6</div>
<div class="cl" style="top:253px"><span class="k">import</span> java.io.ByteArrayInputStream;</div>
<div class="ln" style="top:297px;left:883.85px">7</div>
<div class="cl" style="top:297px"><span class="k">import</span> java.lang.instrument.ClassFileTransformer;</div>
<div class="ln" style="top:341px;left:883.85px">8</div>
<div class="cl" style="top:341px"><span class="k">import</span> java.lang.instrument.IllegalClassFormatException;</div>
<div class="ln" style="top:385px;left:883.85px">9</div>
<div class="cl" style="top:385px"><span class="k">import</span> java.security.ProtectionDomain;</div>
<div class="ln" style="top:429px;left:869.40px">10</div>
<div class="ln" style="top:517px;left:869.40px">11</div>
<div class="cl" style="top:517px"><span class="k">public class</span> MyTransformer <span class="k">implements</span> ClassFileTransformer {</div>
<div class="ln" style="top:589px;left:869.40px">12</div>
<div class="cl" style="top:589px">   <span class="a">@Override</span></div>
<div class="ln" style="top:633px;left:869.40px">13</div>
<div class="cl" style="top:633px">   <span class="k">public  byte</span>[] <span class="f">transform</span>(ClassLoader loader, String classname, Class&lt;?&gt; classBeingRedefined, ProtectionDomain protectionDomain, <span class="k">byte</span>[] classfileBuffer) <span class="k">throws</span> IllegalClassFormatException {</div>
<div class="ln" style="top:677px;left:869.40px">14</div>
<div class="cl" style="top:677px">       <span class="k">if</span> (classname.equals(<span class="s">"org/example/Fox"</span>)){</div>
<div class="ln" style="top:721px;left:869.40px">15</div>
<div class="cl" style="top:721px">           ClassPool pool = ClassPool.<span class="i">getDefault</span>();</div>
<div class="ln" style="top:765px;left:869.40px">16</div>
<div class="cl" style="top:765px">           pool.appendClassPath(<span class="k">new</span> LoaderClassPath(loader));</div>
<div class="ln" style="top:809px;left:869.40px">17</div>
<div class="cl" style="top:809px">           <span class="k">try</span> {</div>
<div class="ln" style="top:853px;left:869.40px">18</div>
<div class="cl" style="top:853px">               CtClass cc = pool.makeClass(<span class="k">new</span> ByteArrayInputStream(classfileBuffer));</div>
<div class="ln cur" style="top:897px;left:869.40px">19</div>
<div class="cl" style="top:897px">               CtMethod say = cc.getDeclaredMethod(<span class="hint" style="width:97px"><span class="hb" style="left:3px;width:90px"></span><span class="ht">name:</span></span><span class="s">"say"</span>);</div>
<div class="ln" style="top:941px;left:869.40px">20</div>
<div class="cl" style="top:941px">               say.insertBefore(<span class="hint" style="width:70px"><span class="hb" style="left:3px;width:62px"></span><span class="ht">src:</span></span><span class="s">"System.out.println(</span><span class="e">\"</span><span class="s cjk">陈胜王</span><span class="e">\"</span><span class="s">);"</span>);</div>
<div class="ln" style="top:985px;left:869.40px">21</div>
<div class="cl" style="top:985px">               <span class="k">return</span> cc.toBytecode();</div>
<div class="ln" style="top:1029px;left:869.40px">22</div>
<div class="cl" style="top:1029px">           } <span class="k">catch</span> (Exception e) {</div>
<div class="ln" style="top:1073px;left:869.40px">23</div>
<div class="cl" style="top:1073px">               <span class="k">throw new</span> RuntimeException(e);</div>
</div>
<span class="t" style="left:1008.00px;top:485.00px;font-size:24px;color:#6f737a;letter-spacing:1.492px">2 <span class="cj" style="font-size:23.5px">个用法</span></span>
<svg class="ic" style="left:1055.5px;top:561.5px" width="25" height="25" viewBox="0 0 25 25" ><polygon points="8.75,0.12 13.07,0.12 14.53,2.75 21.52,2.75 23.35,6.15 21.65,9.38 25.09,15.44 22.93,19.19 19.93,19.13 16.43,25.19 12.57,25.07 10.63,21.99 3.66,21.94 1.50,18.19 3.04,15.62 -0.46,9.56 1.58,6.28 5.22,6.14" fill="#85878b"/><polygon points="6.25,6.30 9.05,1.07 10.75,3.69 9.44,6.95 22.20,6.95 20.95,9.31 8.00,9.31" fill="#303236"/><polygon points="20.99,10.19 24.12,15.22 21.01,15.39 18.84,12.62 12.46,23.68 11.04,21.41 17.51,10.20" fill="#303236"/><polygon points="10.26,21.01 4.33,21.20 5.74,18.42 9.22,17.93 2.84,6.87 5.51,6.78 11.99,17.99" fill="#303236"/></svg>
<svg class="ic" style="left:1084.5px;top:569.5px" width="15" height="10" viewBox="0 0 15 10" ><path d="M2 2L7.5 8L13 2" fill="none" stroke="#b4b8bf" stroke-width="1.8" stroke-linecap="round" stroke-linejoin="round"/></svg>
<svg class="ic" style="left:909px;top:639px" width="30" height="28" viewBox="0 0 30 28" ><circle cx="12" cy="15" r="10" fill="#25324d" stroke="#548af7" stroke-width="2.200"/><circle cx="12" cy="15" r="4.800" fill="#25324d" stroke="#548af7" stroke-width="2.200"/><path d="M24 15V3M19.500 7l4.500-4.500L28.500 7" fill="none" stroke="#db5c5c" stroke-width="2.200" stroke-linecap="round" stroke-linejoin="round"/></svg>
<svg class="ic" style="left:943px;top:639px" width="30" height="30" viewBox="0 0 30 30" ><g fill="none" stroke="#ced0d6" stroke-width="2.300" stroke-linecap="round"><circle cx="14.500" cy="13.500" r="4.600"/><path d="M19.200 8.500v7.200c0 4 6.500 4 7-2.200 .500-7-5-11.500-11.500-11.500a12.500 12.500 0 1 0 6.500 23.300"/></g></svg>
<div style="position:absolute;left:1009px;top:1098px;width:1000px;height:16px;background:rgba(255,255,255,.17);"></div>
<div style="position:absolute;left:2782px;top:288px;width:16px;height:503px;background:rgba(255,255,255,.165);"></div>
</div></div>
<svg class="ic" style="left:2604px;top:177px" width="24" height="24" viewBox="0 0 24 24" ><path d="M12 2.200a2.200 2.200 0 0 1 1.900 1.100l9.300 16a2.200 2.200 0 0 1-1.900 3.300H2.700a2.200 2.200 0 0 1-1.900-3.300l9.300-16A2.200 2.200 0 0 1 12 2.200z" fill="#d6ae58"/><rect x="10.600" y="7.500" width="2.800" height="8" rx="1.200" fill="#1e1f22"/><circle cx="12" cy="18.600" r="1.700" fill="#1e1f22"/></svg>
<span class="t" style="left:2632.50px;top:178.00px;font-size:27px;color:#bcbec4">1</span>
<svg class="ic" style="left:2661.5px;top:178px" width="25" height="26" viewBox="0 0 25 26" ><path d="M2.500 11l6.500 6L22 2.500" fill="none" stroke="#57965c" stroke-width="3.400" stroke-linecap="round" stroke-linejoin="round"/><path d="M1 22.500l3.500-3 3.500 3 3.500-3 3.500 3 3.500-3 3 2.500" fill="none" stroke="#57965c" stroke-width="1.800" stroke-linejoin="round" stroke-linecap="round"/></svg>
<span class="t" style="left:2690.50px;top:178.00px;font-size:27px;color:#bcbec4">1</span>
<svg class="ic" style="left:2724.5px;top:184.0px" width="19" height="12" viewBox="0 0 19 12" ><path d="M2 10L9.5 2L17 10" fill="none" stroke="#b4b8bf" stroke-width="2" stroke-linecap="round" stroke-linejoin="round"/></svg>
<svg class="ic" style="left:2766.5px;top:184.0px" width="19" height="12" viewBox="0 0 19 12" ><path d="M2 2L9.5 10L17 2" fill="none" stroke="#b4b8bf" stroke-width="2" stroke-linecap="round" stroke-linejoin="round"/></svg>
</main>
<nav id="right-strip">
<div style="position:absolute;left:2802px;top:82px;width:77px;height:1565px;background:#2b2d30;"></div>
<svg class="ic" style="left:2823px;top:100px" width="46" height="46" viewBox="0 0 40 40" ><g fill="none" stroke="#ced0d6" stroke-width="2.8" stroke-linecap="round" stroke-linejoin="round"><path d="M4 27.500h26c-2.500-3-3.500-5.500-3.500-9v-4.500a9.500 9.500 0 0 0-19 0v4.500c0 3.500-1 6-3.500 9z"/></g><path d="M12.500 31.500h9a4.500 4.500 0 0 1-9 0z" fill="#ced0d6"/><circle cx="28.300" cy="8" r="7.300" fill="#2b2d30"/></svg>
<svg class="ic" style="left:2848px;top:102.5px" width="14" height="14" viewBox="0 0 14 14" ><circle cx="7" cy="7" r="6.500" fill="#548af7"/></svg>
<svg class="ic" style="left:2822.4px;top:182.6px" width="39" height="39" viewBox="0 0 39 39" ><g fill="none" stroke="#ced0d6" stroke-width="3.100" stroke-linecap="round" stroke-linejoin="round"><path d="M6.49 6.49L7.98 5.77L9.62 5.39L11.26 5.23L12.80 5.14L14.18 4.89L15.53 4.67L16.88 4.63L18.20 4.70L19.50 4.80L20.78 4.86L22.05 5.02L23.30 5.30L24.53 5.69L25.71 6.18L26.85 6.77L27.93 7.46L28.95 8.24L29.89 9.11L30.76 10.06L31.53 11.08L32.20 12.16L32.78 13.31L33.26 14.49L33.63 15.71L33.90 16.96L34.05 18.23L34.10 19.50L33.88 20.76L33.48 21.96L32.93 23.10L32.28 24.15L31.55 25.12L30.76 26.00L29.96 26.82L29.15 27.60L28.22 28.22L27.19 28.66L26.11 28.93L25.01 29.04L23.94 29.02L22.91 28.88L21.95 28.66L21.07 28.40L20.26 28.14L19.50 27.90L18.77 27.79L18.07 27.58L17.41 27.30L16.79 26.95L16.21 26.55L15.69 26.10L15.20 25.64L14.76 25.15L14.34 24.66L13.92 24.18L13.56 23.66L13.25 23.11L13.00 22.53L12.80 21.94L12.65 21.33L12.55 20.72L12.50 20.11L12.50 19.50L12.66 18.90L12.92 18.34L13.25 17.83L13.65 17.37L14.08 16.97L14.53 16.63L14.98 16.34L15.42 16.07L15.82 15.82L16.26 15.64L16.75 15.57L17.24 15.59L17.72 15.69L18.17 15.84L18.57 16.04L18.93 16.25L19.23 16.44L19.50 16.60L19.74 16.77L19.94 17.02L20.08 17.33L20.17 17.67L20.20 18.00L20.19 18.30L20.17 18.55L20.14 18.73"/><path d="M32.51 32.51L31.02 33.23L29.38 33.61L27.74 33.77L26.20 33.86L24.82 34.11L23.47 34.33L22.12 34.37L20.80 34.30L19.50 34.20L18.22 34.14L16.95 33.98L15.70 33.70L14.47 33.31L13.29 32.82L12.15 32.23L11.07 31.54L10.05 30.76L9.11 29.89L8.24 28.94L7.47 27.92L6.80 26.84L6.22 25.69L5.74 24.51L5.37 23.29L5.10 22.04L4.95 20.77L4.90 19.50L5.12 18.24L5.52 17.04L6.07 15.90L6.72 14.85L7.45 13.88L8.24 13.00L9.04 12.18L9.85 11.40L10.78 10.78L11.81 10.34L12.89 10.07L13.99 9.96L15.06 9.98L16.09 10.12L17.05 10.34L17.93 10.60L18.74 10.86L19.50 11.10L20.23 11.21L20.93 11.42L21.59 11.70L22.21 12.05L22.79 12.45L23.31 12.90L23.80 13.36L24.24 13.85L24.66 14.34L25.08 14.82L25.44 15.34L25.75 15.89L26.00 16.47L26.20 17.06L26.35 17.67L26.45 18.28L26.50 18.89L26.50 19.50L26.34 20.10L26.08 20.66L25.75 21.17L25.35 21.63L24.92 22.03L24.47 22.37L24.02 22.66L23.58 22.93L23.18 23.18L22.74 23.36L22.25 23.43L21.76 23.41L21.28 23.31L20.83 23.16L20.43 22.96L20.07 22.75L19.77 22.56L19.50 22.40L19.26 22.23L19.06 21.98L18.92 21.67L18.83 21.33L18.80 21.00L18.81 20.70L18.83 20.45L18.86 20.27"/></g></svg>
<svg class="ic" style="left:2825px;top:263px" width="34" height="38" viewBox="0 0 34 38" ><g fill="none" stroke="#ced0d6" stroke-width="2.8" stroke-linecap="round" stroke-linejoin="round"><ellipse cx="17" cy="8" rx="14.500" ry="6"/><path d="M2.500 8v20.500c0 3.300 6.500 6 14.500 6s14.500-2.700 14.500-6V8"/><path d="M2.500 15c0 3.300 6.500 6 14.500 6s14.500-2.700 14.500-6"/><path d="M2.500 22c0 3.300 6.500 6 14.500 6s14.500-2.700 14.500-6"/><path d="M2.500 28.500"/></g></svg>
<svg class="ic" style="left:2821.5px;top:341px" width="41" height="41" viewBox="0 0 41 41" ><polygon points="14.35,0.21 21.44,0.21 23.82,4.51 35.30,4.51 38.29,10.09 35.51,15.38 41.15,25.32 37.60,31.46 32.69,31.37 26.95,41.31 20.62,41.12 17.44,36.06 6.00,35.97 2.45,29.83 4.99,25.62 -0.75,15.68 2.58,10.30 8.56,10.07" fill="#ced0d6"/><polygon points="10.25,10.33 14.84,1.76 17.63,6.05 15.48,11.40 36.41,11.40 34.36,15.27 13.12,15.27" fill="#2b2d30"/><polygon points="34.43,16.71 39.56,24.97 34.45,25.24 30.89,20.70 20.43,38.83 18.10,35.12 28.72,16.72" fill="#2b2d30"/><polygon points="16.82,34.46 7.10,34.77 9.42,30.21 15.13,29.40 4.66,11.27 9.04,11.11 19.66,29.51" fill="#2b2d30"/></svg>
<span class="t" style="left:2823.00px;top:416.50px;font-size:46px;color:#ced0d6;font-style:italic">m</span>
</nav>
<section id="terminal">
<div class="panel" style="position:absolute;left:82px;top:1118px;width:2720px;height:80px;background:#2b2d30;"></div>
<div style="position:absolute;left:80px;top:1198px;width:2722px;height:449px;background:#1e1f22;"></div>
<span class="t" style="left:106.50px;top:1146.00px;font-size:26px;color:#dfe1e5"><span class="cj" style="font-size:26px;font-weight:500">终端</span></span>
<span class="t" style="left:216.50px;top:1146.00px;font-size:27px;color:#dfe1e5;letter-spacing:-0.172px"><span class="cj" style="font-size:26px">本地</span> (2)</span>
<svg class="ic" style="left:334.0px;top:1152.0px" width="16" height="16" viewBox="0 0 16 16" ><path d="M2 2L14 14M14 2L2 14" fill="none" stroke="#868a91" stroke-width="2" stroke-linecap="round"/></svg>
<div style="position:absolute;left:192px;top:1194px;width:180px;height:6px;background:#5a5d63;border-radius:3px;"></div>
<div id="term">
<div class="tl" style="top:1200.5px">21264 org.jetbrains.idea.maven.server.RemoteMavenServer36</div>
<div class="tl" style="top:1244.5px">51696 org.jetbrains.idea.maven.server.RemoteMavenServer36</div>
<div class="tl" style="top:1288.5px">45348 jdk.jcmd/sun.tools.jps.Jps</div>
<div class="tl" style="top:1332.5px">49880 org.jetbrains.jps.cmdline.Launcher</div>
<div class="tl" style="top:1376.5px">44332 org.jetbrains.jps.cmdline.Launcher</div>
<div class="tl" style="top:1420.5px">44908</div>
<div class="tl" style="top:1464.5px">4876 org.example.Main</div>
<div style="position:absolute;left:93px;top:1571px;width:13px;height:6px;background:#da5f0f;"></div>
<div style="position:absolute;left:100px;top:1565px;width:6px;height:19px;background:#da5f0f;"></div>
<div style="position:absolute;left:106px;top:1556px;width:176px;height:36px;background:#da5f0f;"></div>
<svg class="ic" style="left:114px;top:1565px" width="21" height="20" viewBox="0 0 21 20" ><rect x="0" y="0" width="9.500" height="9" fill="#fbf1c7"/><rect x="0" y="11" width="9.500" height="9" fill="#fbf1c7"/><rect x="11.5" y="0" width="9.500" height="9" fill="#fbf1c7"/><rect x="11.5" y="11" width="9.500" height="9" fill="#fbf1c7"/></svg>
<div style="position:absolute;left:298px;top:1556px;width:529px;height:36px;background:#d79921;"></div>
<svg class="ic" style="left:298px;top:1556px" width="16" height="36" viewBox="0 0 16 36" ><polygon points="0,0 15.500,18 0,36" fill="#da5f0f"/></svg>
<div style="position:absolute;left:827px;top:1556px;width:16px;height:36px;background:#689d6a;"></div>
<svg class="ic" style="left:827px;top:1556px" width="16" height="36" viewBox="0 0 16 36" ><polygon points="0,0 16,18 0,36" fill="#d79921"/></svg>
<div style="position:absolute;left:843px;top:1556px;width:64px;height:36px;background:#458588;"></div>
<svg class="ic" style="left:843px;top:1556px" width="16" height="36" viewBox="0 0 16 36" ><polygon points="0,0 16,18 0,36" fill="#689d6a"/></svg>
<svg class="ic" style="left:876px;top:1574px" width="24" height="14" viewBox="0 0 24 14" ><path d="M21 5v6H3M6.500 8l-3.500 3 3.500 3" fill="none" stroke="#fbf1c7" stroke-width="1.600"/></svg>
<div style="position:absolute;left:907px;top:1556px;width:16px;height:36px;background:#665c54;"></div>
<svg class="ic" style="left:907px;top:1556px" width="16" height="36" viewBox="0 0 16 36" ><polygon points="0,0 16,18 0,36" fill="#458588"/></svg>
<div style="position:absolute;left:923px;top:1556px;width:863px;height:36px;background:#3c3836;"></div>
<svg class="ic" style="left:923px;top:1556px" width="16" height="36" viewBox="0 0 16 36" ><polygon points="0,0 16,18 0,36" fill="#665c54"/></svg>
<svg class="ic" style="left:1786px;top:1560px" width="18" height="28" viewBox="0 0 18 28" ><polygon points="0,11 6,14 13.300,2.500 16,8 16,22 11,20 5,26 7.300,17 0,12" fill="#3c3836"/></svg>
<svg class="ic" style="left:953px;top:1561px" width="28" height="28" viewBox="0 0 28 28" ><g fill="none" stroke="#fbf1c7" stroke-width="2.600" stroke-linecap="round" stroke-linejoin="round"><circle cx="14" cy="14" r="11.800"/><path d="M14 7v7.500l5 2.500"/></g></svg>
<svg class="ic" style="left:1091.5px;top:1562px" width="16" height="27" viewBox="0 0 16 27" ><rect x="4.500" y="0" width="7" height="4" rx="1" fill="#9b9b9b"/><rect x="0" y="3" width="16" height="23" rx="2.500" fill="#7cc52e"/><rect x="1.500" y="23.500" width="13" height="2.500" rx="1" fill="#9b9b9b"/><path d="M8 7v4M6 9h4M6.500 20.500h3" stroke="#fff" stroke-width="1.500"/></svg>
<svg class="ic" style="left:1197px;top:1562px" width="30" height="28" viewBox="0 0 30 28" ><path d="M14 1.500c-4 -1.500-8 0-8.500 3-3 .500-5 3-4.500 6-1.500 2.500-1 6 2 7.500 1 2.500 4 3.500 6.500 2.500 1 1.500 3 2 4.500 1.500l2 4 1-4.500c2.500 .500 5.500-.500 6.500-3 3-1 4.500-4 3.500-7 .500-3.500-2-6.500-5-7-1.500-3-5-4.500-8-3z" fill="#f765ab"/><path d="M8 8c2-1.500 4-1.500 5.500 0M15 6c2 .500 3 2 3 4M6 13c2 0 3.500 1 4 3M13 12c2-1 4.500-.500 6 1.500M19 16c1.500 0 3 1 3.500 2.500M10 19c1.500-1 3-1 4.500 0" fill="none" stroke="#c83d86" stroke-width="1.300" stroke-linecap="round"/></svg>
<svg class="ic" style="left:1438.5px;top:1562px" width="27" height="27" viewBox="0 0 27 27" ><path d="M0 2.500A2.500 2.500 0 0 1 2.500 0H22l4.500 4.500V24a2.500 2.500 0 0 1-2.500 2.500H2.500A2.500 2.500 0 0 1 0 24z" fill="#44357a"/><rect x="5" y="0" width="14.500" height="8.500" fill="#e4e2ee"/><rect x="13.500" y="1.500" width="3.500" height="5.500" fill="#44357a"/><rect x="3.500" y="13" width="19.500" height="13.500" fill="#f4f4f6"/><rect x="3.500" y="13" width="19.500" height="4" fill="#ee4b4b"/></svg>
<div class="pl" style="top:1552px">
<span class="pt" style="left:154px">ZhuanZ1</span>
<span class="pt" style="left:330px">…\javasec2\agent\agent-premain</span>
<span class="pt" style="left:986px">14:22</span>
<span class="pt" style="left:1130px">80%</span>
<span class="pt" style="left:1242px">19GiB/31GiB</span>
<span class="pt" style="left:1482px">13GiB/13GiB took 0s</span>
</div>
<svg class="ic" style="left:94px;top:1608px" width="14" height="20" viewBox="0 0 14 20" ><g fill="none" stroke="#a3a020" stroke-width="2"><path d="M1 10h10"/><path d="M8.500 3.500l2.500 3M8.500 16.500l2.500-3" stroke-dasharray="3 2"/></g></svg>
<div class="cursor" style="left:121px;top:1595px;width:18px;height:46px"></div>
</div>
<div style="position:absolute;left:2782px;top:1504px;width:16px;height:140px;background:rgba(255,255,255,.145);"></div>
</section>
<footer id="statusbar">
<div style="position:absolute;left:0px;top:1647px;width:2879px;height:1px;background:#1e1f22;"></div>
<div class="panel" style="position:absolute;left:0px;top:1648px;width:2879px;height:55px;background:#2b2d30;"></div>
<div style="position:absolute;left:0px;top:1703px;width:2879px;height:2px;background:#3c3e43;"></div>
<div style="position:absolute;left:0px;top:1705px;width:2879px;height:10px;background:#1a1a1f;background:linear-gradient(90deg,#1a1a1f 0,#1a1a1f 45%,#1c1b2a 72%,#1b1b24 88%,#1a1a1f 100%);"></div>
<div style="position:absolute;left:1980px;top:1712px;width:75px;height:8px;background:#2a2a34;border-radius:4px;"></div>
<svg class="ic" style="left:28px;top:1668px" width="16" height="16" viewBox="0 0 16 16" ><rect x="1.100" y="1.100" width="13.800" height="13.800" rx="3.500" fill="#25324d" stroke="#548af7" stroke-width="2.200"/></svg>
<span class="t" style="left:51.50px;top:1662.00px;font-size:27px;color:#a1a4ab;letter-spacing:0.741px">agent-premain</span>
<span class="t" style="left:281.50px;top:1662.00px;font-size:27px;color:#a1a4ab;letter-spacing:2.000px">src</span>
<span class="t" style="left:369.50px;top:1662.00px;font-size:27px;color:#a1a4ab;letter-spacing:0.490px">main</span>
<span class="t" style="left:476.50px;top:1662.00px;font-size:27px;color:#a1a4ab;letter-spacing:0.823px">java</span>
<svg class="ic" style="left:578px;top:1660px" width="28" height="28" viewBox="0 0 28 28" ><circle cx="14.0" cy="14.0" r="13.0" fill="#25324d" stroke="#548af7" stroke-width="2"/><path d="M18.83 9.65A6.50 6.50 0 1 0 18.83 18.35" fill="none" stroke="#548af7" stroke-width="2.2" stroke-linecap="round"/></svg>
<span class="t" style="left:615.50px;top:1662.00px;font-size:27px;color:#a1a4ab;letter-spacing:0.832px">MyTransformer</span>
<svg class="ic" style="left:858px;top:1660px" width="28" height="28" viewBox="0 0 28 28" ><circle cx="14.0" cy="14.0" r="13.0" fill="#402929" stroke="#db5c5c" stroke-width="2"/><text x="14.0" y="20.2" text-anchor="middle" font-family="Liberation Sans, sans-serif" font-size="22.5" fill="#db5c5c" stroke="#db5c5c" stroke-width=".35" textLength="17" lengthAdjust="spacingAndGlyphs">m</text></svg>
<span class="t" style="left:895.50px;top:1662.00px;font-size:27px;color:#a1a4ab;letter-spacing:0.996px">transform</span>
<svg class="ic" style="left:251.5px;top:1664.5px" width="12" height="19" viewBox="0 0 12 19" ><path d="M2 2L10 9.5L2 17" fill="none" stroke="#a9acb3" stroke-width="2.3" stroke-linecap="round" stroke-linejoin="round"/></svg>
<svg class="ic" style="left:339.5px;top:1664.5px" width="12" height="19" viewBox="0 0 12 19" ><path d="M2 2L10 9.5L2 17" fill="none" stroke="#a9acb3" stroke-width="2.3" stroke-linecap="round" stroke-linejoin="round"/></svg>
<svg class="ic" style="left:447.5px;top:1664.5px" width="12" height="19" viewBox="0 0 12 19" ><path d="M2 2L10 9.5L2 17" fill="none" stroke="#a9acb3" stroke-width="2.3" stroke-linecap="round" stroke-linejoin="round"/></svg>
<svg class="ic" style="left:545.5px;top:1664.5px" width="12" height="19" viewBox="0 0 12 19" ><path d="M2 2L10 9.5L2 17" fill="none" stroke="#a9acb3" stroke-width="2.3" stroke-linecap="round" stroke-linejoin="round"/></svg>
<svg class="ic" style="left:825.5px;top:1664.5px" width="12" height="19" viewBox="0 0 12 19" ><path d="M2 2L10 9.5L2 17" fill="none" stroke="#a9acb3" stroke-width="2.3" stroke-linecap="round" stroke-linejoin="round"/></svg>
<span class="t" style="left:2244.50px;top:1662.00px;font-size:26px;color:#a1a4ab;letter-spacing:-0.120px">19:12</span>
<span class="t" style="left:2341.50px;top:1663.00px;font-size:25.5px;color:#a1a4ab;letter-spacing:0.135px">CRLF</span>
<span class="t" style="left:2439.50px;top:1662.00px;font-size:27px;color:#a1a4ab;letter-spacing:0.750px">UTF-8</span>
<svg class="ic" style="left:2554px;top:1662.5px" width="28" height="26" viewBox="0 0 28 26" ><g fill="none" stroke="#ced0d6" stroke-width="2" stroke-linecap="round"><path d="M2.500 13c2.500-5 6.500-7.500 11-7.500s8.500 2.500 11 7.500c-2.500 5-6.500 7.500-11 7.500"/><circle cx="13.500" cy="13" r="4.500"/><path d="M1.500 24.500L25.500 1.500"/></g></svg>
<svg class="ic" style="left:2615.8px;top:1659.9px" width="32.2" height="32.2" viewBox="0 0 32.2 32.2" ><defs><linearGradient id="tg1" x1="0" y1="0" x2="0" y2="1"><stop offset="0" stop-color="#7467ff"/><stop offset="1" stop-color="#5b2cf2"/></linearGradient></defs><polygon points="11.27,0.16 16.84,0.16 18.71,3.54 27.72,3.54 30.07,7.92 27.89,12.08 32.32,19.89 29.53,24.71 25.67,24.64 21.16,32.45 16.20,32.29 13.69,28.32 4.71,28.25 1.93,23.43 3.92,20.12 -0.59,12.31 2.03,8.09 6.72,7.91" fill="url(#tg1)"/><polygon points="8.05,8.11 11.66,1.38 13.85,4.75 12.16,8.95 28.59,8.95 26.98,11.99 10.30,11.99" fill="#ffffff"/><polygon points="27.04,13.12 31.07,19.61 27.06,19.82 24.26,16.26 16.04,30.49 14.21,27.58 22.55,13.13" fill="#ffffff"/><polygon points="13.21,27.06 5.58,27.31 7.40,23.73 11.88,23.09 3.66,8.85 7.10,8.73 15.44,23.17" fill="#ffffff"/></svg>
<span class="t" style="left:2680.00px;top:1662.00px;font-size:27px;color:#a1a4ab;letter-spacing:0.227px">4 <span class="cj" style="font-size:26px">个空格</span></span>
<svg class="ic" style="left:2819.5px;top:1663.5px" width="28" height="26" viewBox="0 0 28 26" ><g fill="none" stroke="#ced0d6" stroke-width="2.200" stroke-linecap="round" stroke-linejoin="round"><rect x="1.200" y="10.500" width="19" height="13" rx="3"/><path d="M15 10V7a5 5 0 0 1 10 0v1"/><path d="M10.700 15v4"/></g></svg>
</footer>
</div>
</body></html>
